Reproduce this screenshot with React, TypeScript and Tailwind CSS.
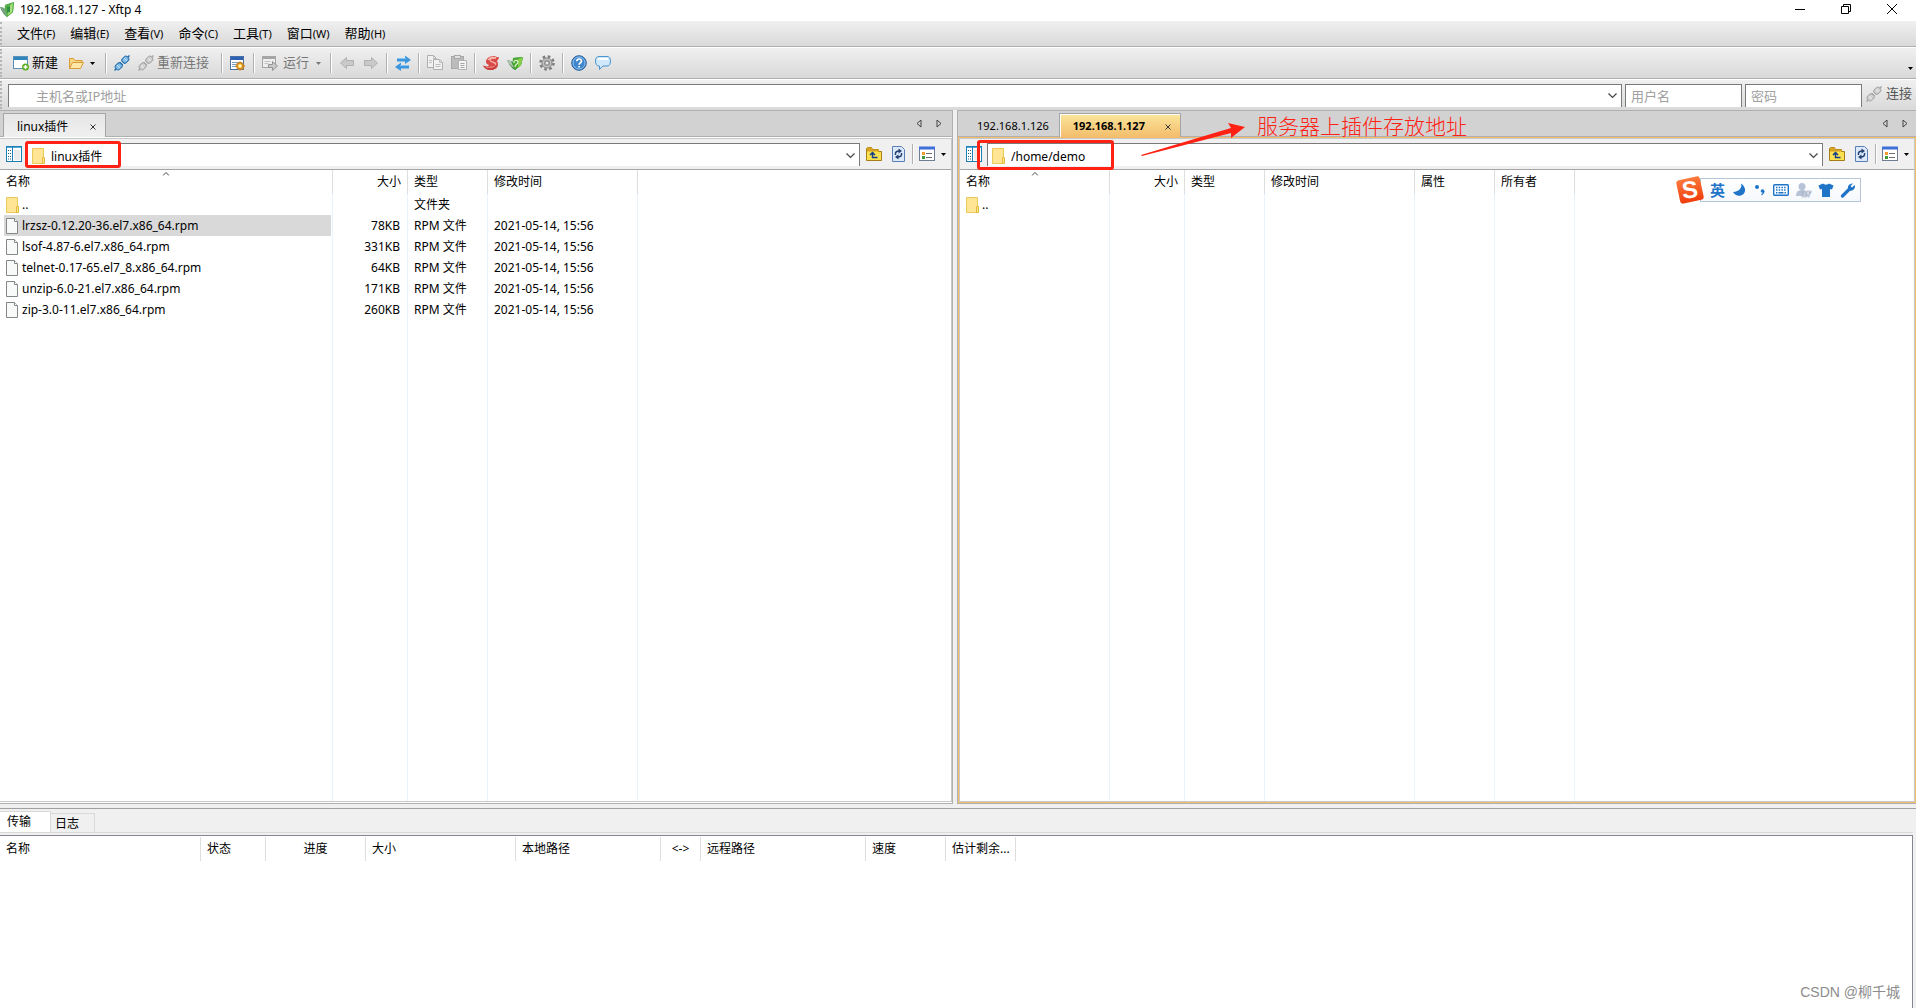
import { ReactNode } from 'react';
import clsx from 'clsx';

type Column = { label: string; width: string; align?: 'right' | 'center' };
type FileRow = { name: string; folder?: boolean; selected?: boolean; cells: string[] };

const menus = [
  ['文件', 'F'],
  ['编辑', 'E'],
  ['查看', 'V'],
  ['命令', 'C'],
  ['工具', 'T'],
  ['窗口', 'W'],
  ['帮助', 'H'],
];

const localColumns: Column[] = [
  { label: '名称', width: 'w-[333px]' },
  { label: '大小', width: 'w-[75px]', align: 'right' },
  { label: '类型', width: 'w-[80px]' },
  { label: '修改时间', width: 'w-[150px]' },
];

const localFiles: FileRow[] = [
  { name: '..', folder: true, cells: ['', '文件夹', ''] },
  { name: 'lrzsz-0.12.20-36.el7.x86_64.rpm', selected: true, cells: ['78KB', 'RPM 文件', '2021-05-14, 15:56'] },
  { name: 'lsof-4.87-6.el7.x86_64.rpm', cells: ['331KB', 'RPM 文件', '2021-05-14, 15:56'] },
  { name: 'telnet-0.17-65.el7_8.x86_64.rpm', cells: ['64KB', 'RPM 文件', '2021-05-14, 15:56'] },
  { name: 'unzip-6.0-21.el7.x86_64.rpm', cells: ['171KB', 'RPM 文件', '2021-05-14, 15:56'] },
  { name: 'zip-3.0-11.el7.x86_64.rpm', cells: ['260KB', 'RPM 文件', '2021-05-14, 15:56'] },
];

const remoteColumns: Column[] = [
  { label: '名称', width: 'w-[150px]' },
  { label: '大小', width: 'w-[75px]', align: 'right' },
  { label: '类型', width: 'w-[80px]' },
  { label: '修改时间', width: 'w-[150px]' },
  { label: '属性', width: 'w-[80px]' },
  { label: '所有者', width: 'w-[80px]' },
];

const remoteFiles: FileRow[] = [{ name: '..', folder: true, cells: ['', '', '', '', ''] }];

const transferColumns: Column[] = [
  { label: '名称', width: 'w-[201px]' },
  { label: '状态', width: 'w-[65px]' },
  { label: '进度', width: 'w-[100px]', align: 'center' },
  { label: '大小', width: 'w-[150px]' },
  { label: '本地路径', width: 'w-[145px]' },
  { label: '<->', width: 'w-[40px]', align: 'center' },
  { label: '远程路径', width: 'w-[165px]' },
  { label: '速度', width: 'w-[80px]' },
  { label: '估计剩余...', width: 'w-[70px]' },
];

/* ---------- icons ---------- */

function Icon({ children, w = 16, h = 16 }: { children: ReactNode; w?: number; h?: number }) {
  return (
    <svg width={w} height={h} viewBox={`0 0 ${w} ${h}`} fill="none" className="shrink-0" aria-hidden="true">
      {children}
    </svg>
  );
}

const LeafIcon = () => (
  <Icon>
    <path d="M0 5l4 1 2 3-1-6 9-3-1 10-6 5c-3-2-5-5-7-10z" fill="#3fa142" />
    <path d="M5 3l9-3-1 10-6 5c-2-3-3-7-2-12z" fill="#57b04a" />
    <path d="M8 5l5-4-1 9-4 3c-1-3-1-5 0-8z" fill="#a9df7c" />
    <path d="M7 5l3-1v6l-3 1z" fill="#2f8f45" />
    <path d="M0 5l4 1 3 8c-3-2-5-5-7-9z" fill="#7fa08a" />
  </Icon>
);

const LeafToolIcon = () => (
  <Icon>
    <path d="M0 5l4 1 2 1V3l10-1-2 8-6 5c-4-2-6-6-8-10z" fill="#2f8a38" />
    <path d="M6 3l10-1-2 8-6 5c-2-4-3-8-2-12z" fill="#4aa832" />
    <path d="M11 4l5-2-2 8-3 3z" fill="#83cf4a" />
    <path d="M7 8a2 2 0 014-1c0 2-3 2-3 5" stroke="#e4f7d0" strokeWidth="1.2" />
    <path d="M0 5l4 1 3 7C4 11 2 9 0 5z" fill="#b7c4b4" />
  </Icon>
);

const SwirlIcon = () => (
  <Icon>
    <path d="M4 4c1-2 4-3 7-3 2 0 3 2 5 1 0 3-2 3-2 4 2 3 1 7-2 8-4 2-9 1-12-3 3 1 5 1 6-1-3-1-4-4-2-6z" fill="#d94a49" />
    <path d="M5 5c2-3 6-3 8-2-3 0-6 0-6 2 0 3 6 1 6 5 0 2-3 3-6 2" stroke="#f8b8ac" strokeWidth="1.3" />
    <path d="M0 10c4 3 10 3 14-1 0 4-3 6-7 6-3 0-6-2-7-5z" fill="#c8373a" />
    <path d="M3 12c3 1 6 1 9-1" stroke="#ef8f86" />
  </Icon>
);

const NewIcon = () => (
  <Icon>
    <rect x="0.5" y="1.5" width="14" height="12" fill="#fff" stroke="#5c90b8" />
    <path d="M1 3.5h13" stroke="#2d87bd" strokeWidth="3" />
    <circle cx="12.5" cy="12" r="3.500" fill="#5cae22" />
    <path d="M12.500 10v4M10.500 12h4" stroke="#fff" strokeWidth="1.400" />
  </Icon>
);

const OpenIcon = () => (
  <Icon>
    <path d="M1.500 13.500V3.500h4l1.500 2h7v3" fill="#f7d684" stroke="#d89b35" />
    <path d="M1.500 13.500l3-6h11l-3 6z" fill="#ffe7a8" stroke="#d89b35" />
  </Icon>
);

const LinkIcon = ({ muted }: { muted?: boolean }) => {
  const dark = muted ? '#a6a6a6' : '#2a6fa8';
  const light = muted ? '#d2d2d2' : '#7fbdea';
  return (
    <Icon>
      <path d="M0.500 15.500l2-2M13.500 2.500l2-2" stroke={dark} strokeWidth="1.500" />
      <rect x="-2.700" y="-3.500" width="5.400" height="7" rx="2" transform="translate(4.700 11.300) rotate(45)" fill={light} stroke={dark} />
      <rect x="-2.700" y="-3.500" width="5.400" height="7" rx="2" transform="translate(11.300 4.700) rotate(45)" fill={light} stroke={dark} />
      <path d="M6 7l3 3M7.500 5.500l3 3" stroke={dark} />
      <path d="M3 10l3 3M10 3l3 3" stroke="#fff" strokeOpacity="0.600" />
    </Icon>
  );
};

const PropertiesIcon = () => (
  <Icon>
    <rect x="0.500" y="1.500" width="13" height="13" fill="#fff" stroke="#4a6fa5" />
    <path d="M1 3.500h12" stroke="#2f62b5" strokeWidth="3" />
    <path d="M2 7.500h10M2 9.500h6M2 11.500h5" stroke="#7f9cc9" />
    <circle cx="10" cy="11" r="3" fill="#fbd35c" stroke="#d48a1a" strokeWidth="1.500" />
    <path d="M10 6.500v2M10 13.500v2M5.500 11h2M12.500 11h2.500M7 8l1 1M12 13l1.500 1.500M13 8l-1 1M7 14l1-1" stroke="#d48a1a" strokeWidth="1.500" />
    <circle cx="10" cy="11" r="1" fill="#fff" />
  </Icon>
);

const RunIcon = () => (
  <Icon>
    <rect x="0.500" y="1.500" width="13" height="11" fill="#eee" stroke="#a5a5a5" />
    <path d="M1 3h12" stroke="#a5a5a5" strokeWidth="2" />
    <path d="M2.500 6.500h6M2.500 8.500h4" stroke="#c2c2c2" />
    <path d="M6.500 9.500h4v-3l5 4.500-5 4.500v-3h-4z" fill="#c9c9c9" stroke="#949494" />
  </Icon>
);

const ArrowIcon = ({ flip }: { flip?: boolean }) => (
  <Icon>
    <path
      d={flip ? 'M14.500 8l-6-5.500v3h-7v5h7v3z' : 'M1.500 8l6-5.500v3h7v5h-7v3z'}
      fill="#c9c9c9"
      stroke="#b0b0b0"
    />
  </Icon>
);

const TransferIcon = () => (
  <Icon>
    <path d="M2 3h8V0.500l6 4.500-6 4V6.500H2z" fill="#3d97de" />
    <path d="M14 10H6V7.500L0 12l6 4v-2.500h8z" fill="#3d97de" />
    <path d="M2 3.500h9M5 10.500h9" stroke="#85c4f2" />
  </Icon>
);

const CopyIcon = () => (
  <Icon>
    <path d="M0.500 0.500h6l3 3v9h-9z" fill="#f1f1f1" stroke="#aeaeae" />
    <path d="M6.500 4.500h6l3 3v7h-9z" fill="#f1f1f1" stroke="#aeaeae" />
    <path d="M6.500 0.500v3h3M12.500 4.500v3h3M2 5.500h3M2 7.500h3M8.500 9.500h5M8.500 11.500h5" stroke="#bdbdbd" />
  </Icon>
);

const PasteIcon = () => (
  <Icon>
    <rect x="0.500" y="1.500" width="12" height="12" fill="#bcbcbc" stroke="#a8a8a8" />
    <rect x="3.500" y="0.500" width="6" height="3" fill="#e2e2e2" stroke="#a8a8a8" />
    <path d="M7.500 5.500h8v9h-8z" fill="#f5f5f5" stroke="#b2b2b2" />
    <path d="M9.500 8.500h4M9.500 10.500h4M9.500 12.500h4" stroke="#a5a5a5" />
  </Icon>
);

const GearIcon = () => (
  <Icon>
    <circle cx="8" cy="8" r="6.500" stroke="#7d7d7d" strokeWidth="2.500" strokeDasharray="2.550 2.550" />
    <circle cx="8" cy="8" r="5" fill="#c4c4c4" stroke="#858585" />
    <circle cx="8" cy="8" r="3" fill="#909090" />
    <circle cx="8" cy="8" r="1.500" fill="#e6e6e6" />
  </Icon>
);

const HelpIcon = () => (
  <Icon>
    <circle cx="8" cy="8" r="7.300" fill="#3f86cc" stroke="#2a6099" />
    <circle cx="8" cy="8" r="6" stroke="#8fc1ee" />
    <path d="M5.800 6.200c0-3 4.600-2.800 4.600 0 0 1.600-2.300 1.700-2.300 3.500M8.100 11v1.600" stroke="#fff" strokeWidth="1.700" />
  </Icon>
);

const BubbleIcon = () => (
  <Icon>
    <path
      d="M4 1.500h8c2.500 0 3.500 1.500 3.500 4.500s-1 5-3.500 5H8l-3.500 3.500V11H4C1.500 11 0.500 9 0.500 6S1.500 1.500 4 1.500z"
      fill="#cfe8fb"
      stroke="#4b93cc"
    />
    <path d="M3 4h10" stroke="#fff" strokeWidth="2" />
  </Icon>
);

const TreeIcon = () => (
  <Icon>
    <rect x="0.500" y="0.500" width="15" height="15" fill="#fff" stroke="#1c7fb5" />
    <path d="M1 1.500h14" stroke="#59add6" />
    <path d="M6.500 1v14" stroke="#1c7fb5" />
    <path d="M2 4.500h1M4 4.500h1M2 7.500h1M4 7.500h1M2 10.500h1M4 10.500h1M2 13h1M4 13h1" stroke="#1d5f8a" />
    <rect x="8" y="4" width="6" height="10" fill="#ebebeb" />
  </Icon>
);

const FolderIcon = () => (
  <Icon w={13}>
    <path d="M0.500 0.500h11v15h-11z" fill="#ffe594" stroke="#ecc95b" />
    <path d="M10.500 9.500h2v6h-2z" fill="#ffe594" stroke="#e6b93a" />
  </Icon>
);

const FileIcon = () => (
  <Icon w={13}>
    <path d="M0.500 0.500h8l3 3v12h-11z" fill="#f8fafa" stroke="#838786" />
    <path d="M8.500 0.500v3h3" fill="#fff" stroke="#838786" />
  </Icon>
);

const UpIcon = () => (
  <Icon>
    <path d="M0.500 14.500v-12l1-1h4l1 2h6v2h3v9z" fill="#fbe04f" stroke="#a67d16" />
    <path d="M1 5.500h12V3.500H6l-1-2H2L1 3z" fill="#d9a322" />
    <path d="M6.500 7v4.500h5M4 9l2.500-2.500L9 9" stroke="#123f8c" strokeWidth="1.500" />
  </Icon>
);

const RefreshIcon = () => (
  <Icon w={13}>
    <path d="M0.500 0.500h9l3 3v12h-12z" fill="#dbe9fb" stroke="#5b7fb4" />
    <path d="M3.500 9c-0.500-3 1-4 4-4M9.500 7c0.500 3-1 4-4 4" stroke="#23406f" strokeWidth="1.500" />
    <path d="M6.500 2.500L10 5 6.500 7.500zM6.500 8.500L3 11l3.500 2.500z" fill="#23406f" />
  </Icon>
);

const ListIcon = () => (
  <Icon>
    <rect x="0.500" y="1.500" width="15" height="13" fill="#fff" stroke="#6f7f92" />
    <path d="M0 2h16" stroke="#3f6fd8" strokeWidth="3" />
    <path d="M3 6h3v3H3z" fill="#f29a2e" />
    <path d="M3 10h3v3H3z" fill="#3f9a3c" />
    <path d="M7 7.500h6M7 11.500h6" stroke="#6d6d6d" />
  </Icon>
);

const Caret = ({ muted }: { muted?: boolean }) => (
  <Icon w={5} h={3}>
    <path d="M0 0h5L2.500 3z" fill={muted ? '#777' : '#000'} />
  </Icon>
);

const Chevron = () => (
  <Icon w={9} h={6}>
    <path d="M0.500 0.500l4 4 4-4" stroke="#444" strokeWidth="1.200" />
  </Icon>
);

const CloseX = () => (
  <Icon w={6} h={6}>
    <path d="M0.500 0.500l5 5M5.500 0.500l-5 5" stroke="#333" />
  </Icon>
);

/* ---------- toolbar ---------- */

function ToolButton({ label, children }: { label: string; children: ReactNode }) {
  return (
    <button type="button" aria-label={label} className="flex items-center">
      {children}
    </button>
  );
}

const Separator = () => <span className="h-5 w-0.5 border-l border-[#b0b0b0] bg-white" />;

const Group = ({ children }: { children: ReactNode }) => <div className="flex items-center gap-2">{children}</div>;

function Toolbar() {
  return (
    <div className="flex h-8 items-center border-t border-b border-t-white border-b-[#b0b0b0] bg-linear-to-b from-[#f0f0f0] to-[#d9d9d9] text-[13px]">
      <Grip />
      <div className="flex items-center gap-[7px] pl-[10px]">
        <button type="button" className="flex items-center gap-[3px]">
          <NewIcon />
          新建
        </button>
        <div className="flex items-center gap-[6px] px-[3px]">
          <ToolButton label="打开"><OpenIcon /></ToolButton>
          <Caret />
        </div>
        <Separator />
        <div className="flex items-center gap-2 pr-[5px]">
          <ToolButton label="连接"><LinkIcon /></ToolButton>
          <button type="button" className="flex items-center gap-[3px] text-[#777]">
            <LinkIcon muted />
            重新连接
          </button>
        </div>
        <Separator />
        <ToolButton label="属性"><PropertiesIcon /></ToolButton>
        <Separator />
        <button type="button" className="flex items-center gap-[5px] pr-[2px] text-[#777]">
          <RunIcon />
          运行
          <span className="pl-[2px]"><Caret muted /></span>
        </button>
        <Separator />
        <Group>
          <ToolButton label="后退"><ArrowIcon /></ToolButton>
          <ToolButton label="前进"><ArrowIcon flip /></ToolButton>
        </Group>
        <Separator />
        <ToolButton label="传输"><TransferIcon /></ToolButton>
        <Separator />
        <Group>
          <ToolButton label="复制"><CopyIcon /></ToolButton>
          <ToolButton label="粘贴"><PasteIcon /></ToolButton>
        </Group>
        <Separator />
        <Group>
          <ToolButton label="Xshell"><SwirlIcon /></ToolButton>
          <ToolButton label="Xftp"><LeafToolIcon /></ToolButton>
        </Group>
        <Separator />
        <ToolButton label="选项"><GearIcon /></ToolButton>
        <Separator />
        <Group>
          <ToolButton label="帮助"><HelpIcon /></ToolButton>
          <ToolButton label="反馈"><BubbleIcon /></ToolButton>
        </Group>
      </div>
      <button type="button" aria-label="更多" className="mr-[3px] mb-2 ml-auto flex self-end">
        <Caret />
      </button>
    </div>
  );
}

const Grip = () => <span className="my-px w-[3px] self-stretch border-l-2 border-dotted border-[#b5b5b5]" />;

function AddressBar() {
  const box = 'flex h-[23px] items-center border border-b-0 border-[#7a7a7a] bg-white';
  const field = 'h-full min-w-0 flex-1 bg-transparent outline-none placeholder:text-[#a0a0a0]';
  return (
    <div className="flex h-[31px] items-center border-t border-white bg-linear-to-b from-[#f0f0f0] to-[#d9d9d9] text-[13px]">
      <Grip />
      <div className="ml-[5px] flex flex-1 items-center gap-[3px]">
        <div className={clsx(box, 'flex-1 pr-1')}>
          <input aria-label="主机名或IP地址" placeholder="主机名或IP地址" className={clsx(field, 'pl-[27px]')} />
          <button type="button" aria-label="历史"><Chevron /></button>
        </div>
        <div className={clsx(box, 'w-[117px]')}>
          <input aria-label="用户名" placeholder="用户名" className={clsx(field, 'pl-[5px]')} />
        </div>
        <div className={clsx(box, 'w-[117px]')}>
          <input type="password" aria-label="密码" placeholder="密码" className={clsx(field, 'pl-[5px]')} />
        </div>
        <button type="button" className="mr-1 flex items-center gap-1 pb-[3px] pl-px text-[#555]">
          <LinkIcon muted />
          连接
        </button>
      </div>
    </div>
  );
}

/* ---------- panes ---------- */

function Tab({ label, closable, tone }: { label: string; closable?: boolean; tone: 'plain' | 'active' | 'hot' }) {
  return (
    <div
      className={clsx(
        '-mb-px flex h-6 items-center self-end pt-0.5',
        tone === 'plain' && 'px-[10px] text-[11px]',
        tone === 'active' && 'w-[103px] justify-between border border-b-0 border-[#a5a5a5] bg-linear-to-b from-[#e6e6e6] to-[#f0f0f0] pr-[9px] pl-[13px] text-[12px]',
        tone === 'hot' && 'w-[122px] justify-between border border-b-0 border-[#a5a5a5] bg-linear-to-b from-[#fbe69b] to-[#f3bd6c] pr-[9px] pl-[13px] text-[11px] font-bold inset-shadow-[1px_1px_0_#fff]'
      )}
    >
      <button type="button">{label}</button>
      {closable && (
        <button type="button" aria-label="关闭">
          <CloseX />
        </button>
      )}
    </div>
  );
}

function PathBar({ path }: { path: string }) {
  return (
    <div className="flex h-[31px] items-start border-b border-[#a5a5a5] bg-[#f0f0f0] pt-1 pl-[6px]">
      <button type="button" aria-label="文件夹树" className="flex h-[22px] items-center">
        <TreeIcon />
      </button>
      <div className="ml-[5px] flex h-[23px] flex-1 items-center border border-b-0 border-[#7a7a7a] bg-white px-1 pt-0.5">
        <FolderIcon />
        <select aria-label="路径" className="h-full flex-1 appearance-none bg-transparent pt-0.5 pl-[6px] text-[12px] outline-none">
          <option>{path}</option>
        </select>
        <Chevron />
      </div>
      <div className="flex h-[22px] items-center pr-[5px] pl-[6px]">
        <ToolButton label="上一级"><UpIcon /></ToolButton>
        <span className="w-[10px]" />
        <ToolButton label="刷新"><RefreshIcon /></ToolButton>
        <span className="w-[7px]" />
        <Separator />
        <span className="w-[5px]" />
        <ToolButton label="视图"><ListIcon /></ToolButton>
        <span className="w-[6px]" />
        <Caret />
      </div>
    </div>
  );
}

function FileTable({ columns, files }: { columns: Column[]; files: FileRow[] }) {
  const line = 'border-r border-[#eaf3fd]';
  return (
    <table className="h-full w-full table-fixed border-separate border-spacing-0 text-[12px] leading-[16px]">
      <thead>
        <tr className="h-6">
          {columns.map((c, i) => (
            <th
              key={c.label}
              className={clsx(c.width, 'relative border-r border-[#dedede] px-[6px] font-normal', c.align === 'right' ? 'text-right' : 'text-left')}
            >
              {c.label}
              {i === 0 && (
                <svg width="7" height="4" viewBox="0 0 7 4" className="absolute top-0.5 left-1/2 -translate-x-1/2" fill="none" aria-hidden="true">
                  <path d="M0.500 3.500l3-3 3 3" stroke="#444" />
                </svg>
              )}
            </th>
          ))}
          <td />
        </tr>
      </thead>
      <tbody>
        {files.map((f) => (
          <tr key={f.name} className="h-[21px]">
            <td className={clsx(line, 'pr-px pl-1')}>
              <div className={clsx('flex h-[21px] items-center gap-[3px] pl-0.5', f.selected && 'bg-[#d9d9d9]')}>
                {f.folder ? <FolderIcon /> : <FileIcon />}
                {f.name}
              </div>
            </td>
            {f.cells.map((cell, i) => (
              <td key={i} className={clsx(line, i === 0 ? 'pr-[7px] text-right' : 'pl-[6px]')}>
                {cell}
              </td>
            ))}
            <td />
          </tr>
        ))}
        {/* empty row that carries the column lines down */}
        <tr>
          {columns.map((c) => (
            <td key={c.label} className={line} />
          ))}
          <td />
        </tr>
      </tbody>
    </table>
  );
}

function Pane({ tabs, path, hot, children }: { tabs: ReactNode; path: string; hot?: boolean; children: ReactNode }) {
  return (
    <section className={clsx('flex min-w-0 flex-col border-y border-[#b0b0b0]', hot ? 'border-l' : 'border-r')}>
      <div className="flex h-[26px] items-end border-b border-[#b0b0b0] bg-[#d2d2d2]">
        {tabs}
        <div className={clsx('ml-auto flex items-center gap-[14px] self-center', hot ? 'pr-[8px]' : 'pr-[10px]')}>
          <ToolButton label="向左">
            <Icon w={6} h={9}><path d="M5 1v7L1 4.500z" stroke="#444" /></Icon>
          </ToolButton>
          <ToolButton label="向右">
            <Icon w={6} h={9}><path d="M1 1v7l4-3.500z" stroke="#444" /></Icon>
          </ToolButton>
        </div>
      </div>
      <div className={clsx('flex min-h-0 flex-1 flex-col', hot ? 'border border-[#f3bd6c]' : 'border-y border-white')}>
        <div className={clsx('flex min-h-0 flex-1 flex-col border border-[#c8c8c8] bg-white', !hot && 'border-l-0')}>
          <PathBar path={path} />
          <div className="min-h-0 flex-1">{children}</div>
        </div>
      </div>
    </section>
  );
}

/* ---------- input method bar ---------- */

function ImeBar() {
  return (
    <div className="absolute top-[176px] right-[55px] flex h-7 items-center">
      <svg width="29" height="28" viewBox="0 0 29 28" className="z-10 -mr-[5px]" aria-hidden="true">
        <defs>
          <linearGradient id="sogou" x1="0" y1="0" x2="0" y2="1">
            <stop offset="0" stopColor="#fb7a3c" />
            <stop offset="1" stopColor="#f03d0c" />
          </linearGradient>
        </defs>
        <rect x="2" y="2" width="24" height="24" rx="3" transform="rotate(-12 14 14)" fill="url(#sogou)" />
        <text x="14" y="22" textAnchor="middle" fontSize="24" fontWeight="700" fontFamily="Liberation Sans, sans-serif" fill="#fff" transform="rotate(-6 14 14)">
          S
        </text>
      </svg>
      <div className="flex h-6 w-[161px] items-center justify-between border border-[#b5c6d8] bg-linear-to-b from-white to-[#f5f8fc] pr-1 pl-[9px] text-[#1f74c8]">
        <span className="text-[15px] leading-5 font-bold">英</span>
        <Icon>
          <path d="M10 1.500c1.500 4-1.500 8-8 8.500 2 4 7.500 5 10.500 2 3-3 1.500-8-2.500-10.500z" fill="currentColor" />
        </Icon>
        <Icon w={14}>
          <circle cx="4" cy="5" r="2" fill="currentColor" />
          <circle cx="9.500" cy="9" r="1.800" fill="currentColor" />
          <path d="M11 9c0 2-1 3-2.500 4" stroke="currentColor" strokeWidth="1.300" />
        </Icon>
        <Icon>
          <rect x="0.700" y="2.700" width="14.600" height="10.600" rx="1" fill="#fff" stroke="currentColor" strokeWidth="1.400" />
          <path d="M3 5.500h10M3 8h10" stroke="currentColor" strokeWidth="1.500" strokeDasharray="1.500 1.200" />
          <path d="M3 10.800h1.500M5.500 10.800h5M11.500 10.800h1.500" stroke="currentColor" strokeWidth="1.400" />
        </Icon>
        <Icon>
          <circle cx="6" cy="4.500" r="3.500" fill="#b5c2d8" />
          <path d="M0 14c0-4 2-6 6-6s6 2 6 6z" fill="#b5c2d8" />
          <text x="10.500" y="15" textAnchor="middle" fontSize="9" fontWeight="700" fontFamily="Liberation Sans, sans-serif" fill="#fff" stroke="#9aa9c2" strokeWidth="0.600">
            17
          </text>
        </Icon>
        <Icon>
          <path d="M5 1.500c1 1.500 5 1.500 6 0l4.500 2L14 7.500l-2-0.500v8H4V7L2 7.500 0.500 3.500z" fill="currentColor" />
        </Icon>
        <Icon>
          <path d="M2.500 14L9 7.500" stroke="currentColor" strokeWidth="3.200" strokeLinecap="round" />
          <path d="M13 1.500L10.500 4l1.500 1.500L14.700 3c1.300 3-1.700 6.500-5 5.500-3-1.500-2.500-7 3.300-7z" fill="currentColor" />
        </Icon>
      </div>
    </div>
  );
}

export default function App() {
  return (
    <div className="relative flex h-screen flex-col overflow-hidden bg-[#f0f0f0] font-['Noto_Sans','Noto_Sans_CJK_SC',sans-serif] text-black">
      {/* Title bar */}
      <header className="flex h-[21px] items-center bg-white pb-0.5 text-[12px]">
        <LeafIcon />
        <h1 className="pl-1 leading-4">192.168.1.127 - Xftp 4</h1>
        <div className="ml-auto flex items-center gap-[34px] pr-[18px] pb-0.5">
          <ToolButton label="最小化">
            <Icon w={12} h={12}><path d="M1 6.500h10" stroke="#000" /></Icon>
          </ToolButton>
          <ToolButton label="还原">
            <Icon w={12} h={12}>
              <path d="M1.500 3.500h7v7h-7zM3.500 3.500v-2h7v7h-2" stroke="#000" />
            </Icon>
          </ToolButton>
          <ToolButton label="关闭">
            <Icon w={12} h={12}><path d="M1 1l10 10M11 1L1 11" stroke="#000" /></Icon>
          </ToolButton>
        </div>
      </header>

      {/* Menu */}
      <nav className="flex h-[26px] items-center border-b border-[#b0b0b0] bg-linear-to-b from-[#f0f0f0] to-[#d9d9d9] text-[13px]">
        <Grip />
        <div className="flex gap-[15px] pl-[14px]">
          {menus.map(([name, key]) => (
            <button key={key} type="button">
              {name}
              <span className="text-[11px]">({key})</span>
            </button>
          ))}
        </div>
      </nav>

      <Toolbar />
      <AddressBar />

      {/* Local and remote panes */}
      <main className="grid min-h-0 flex-1 grid-cols-[953fr_959fr] gap-1">
        <Pane
          path="linux插件"
          tabs={
            <div className="flex pl-[3px]">
              <Tab label="linux插件" closable tone="active" />
            </div>
          }
        >
          <FileTable columns={localColumns} files={localFiles} />
        </Pane>
        <Pane
          hot
          path="/home/demo"
          tabs={
            <div className="flex pl-[9px]">
              <Tab label="192.168.1.126" tone="plain" />
              <Tab label="192.168.1.127" closable tone="hot" />
            </div>
          }
        >
          <FileTable columns={remoteColumns} files={remoteFiles} />
        </Pane>
      </main>

      {/* Transfer queue */}
      <footer className="mt-1 flex h-[200px] flex-col border-t border-[#a0a0a0] pr-[3px]">
        <div className="flex h-6 items-end border-b border-[#d9d9d9] text-[12px]">
          <button type="button" className="h-[21px] w-[51px] border-t border-r border-[#d9d9d9] bg-white pl-[7px] text-left leading-5">
            传输
          </button>
          <button type="button" className="h-[19px] w-11 border-t border-r border-[#d9d9d9] pl-1 text-left leading-5">
            日志
          </button>
        </div>
        <div className="mt-0.5 flex-1 border-t border-r border-[#828790] bg-white pt-px">
          <table className="w-full table-fixed border-separate border-spacing-0 text-[12px] leading-[16px]">
            <thead>
              <tr className="h-6">
                {transferColumns.map((c) => (
                  <th
                    key={c.label}
                    className={clsx(c.width, 'border-r border-[#dedede] px-[6px] font-normal whitespace-nowrap', c.align === 'center' ? 'text-center' : 'text-left')}
                  >
                    {c.label}
                  </th>
                ))}
                <td />
              </tr>
            </thead>
          </table>
        </div>
      </footer>

      {/* Callouts */}
      <div className="pointer-events-none absolute top-[141px] left-[25px] h-[27px] w-24 rounded-[3px] border-3 border-[#ff2214]" />
      <div className="pointer-events-none absolute top-[140px] left-[977px] h-[30px] w-[137px] rounded-[3px] border-3 border-[#ff2214]" />
      <svg width="106" height="36" viewBox="0 0 106 36" className="pointer-events-none absolute top-[122px] left-[1140px]" aria-hidden="true">
        <path d="M1 33L91 6l-3-5 17 4-14 11v-5L2 34z" fill="#ff2214" />
      </svg>
      <p className="absolute top-[112px] left-[1257px] text-[21px] leading-7 font-light text-[#ff2214]">服务器上插件存放地址</p>
      <ImeBar />
      <p className="absolute right-4 bottom-1 font-['Liberation_Sans','Noto_Sans_CJK_SC',sans-serif] text-[14px] leading-6 text-[#8c8c8c]">CSDN @柳千城</p>
    </div>
  );
}
